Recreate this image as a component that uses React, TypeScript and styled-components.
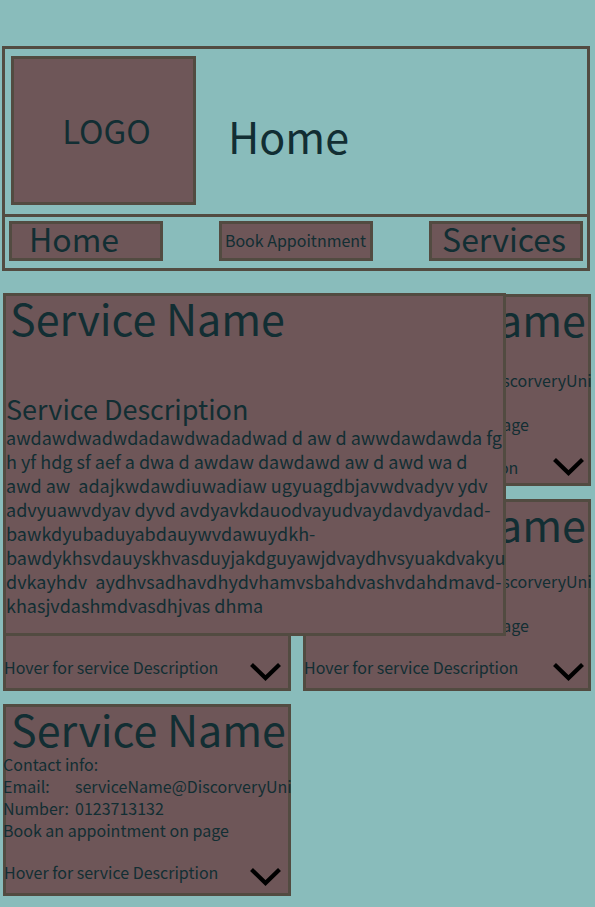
import React from "react";
import styled, { createGlobalStyle } from "styled-components";

const color = {
  page: "#89bcbb",
  panel: "#6e5658",
  line: "#524b41",
  ink: "#122e33",
};

const GlobalStyle = createGlobalStyle`
  *, *::before, *::after { box-sizing: border-box; }
  body {
    margin: 0;
    background: ${color.page};
    color: ${color.ink};
    font-family: "Noto Sans CJK SC", "Noto Sans", sans-serif;
    font-size: 16px;
    line-height: 22px;
  }
  h1, h2, h3, p, dl, dd { margin: 0; font-weight: 400; }
`;

const Page = styled.div`
  padding: 46px 4px 11px 3px;
`;

const Header = styled.header`
  margin: 0 1px 23px -1px;
  border: 3px solid ${color.line};
`;

const Banner = styled.div`
  display: flex;
  align-items: center;
  gap: 32px;
  padding: 7px 6px 9px;
  border-bottom: 3px solid ${color.line};
`;

const Logo = styled.div`
  display: flex;
  align-items: center;
  justify-content: center;
  width: 185px;
  height: 149px;
  padding: 0 0 2px 6px;
  background: ${color.panel};
  border: 3px solid ${color.line};
  font-size: 33px;
  line-height: 40px;
`;

const PageTitle = styled.h1`
  padding-top: 8px;
  font-size: 43px;
  line-height: 56px;
`;

const Nav = styled.nav`
  display: flex;
  justify-content: space-between;
  padding: 4px 4px 7px;
`;

const NavLink = styled.a<{ $large?: boolean; $start?: boolean }>`
  display: flex;
  align-items: center;
  justify-content: ${(p) => (p.$start ? "flex-start" : "center")};
  width: 154px;
  height: 40px;
  padding: ${(p) => (p.$large ? "0 4px 6px 0" : "0 1px 2px 0")};
  padding-left: ${(p) => (p.$start ? "17px" : "0")};
  background: ${color.panel};
  border: 3px solid ${color.line};
  color: inherit;
  font-size: ${(p) => (p.$large ? "32px" : "16px")};
  line-height: 28px;
  text-decoration: none;
  white-space: nowrap;
`;

const Services = styled.main`
  display: grid;
  grid-template-columns: 1fr 1fr;
  gap: 13px 12px;
  position: relative;
`;

const HoverButton = styled.button`
  display: flex;
  align-items: flex-end;
  justify-content: space-between;
  margin-top: auto;
  padding: 0 10px 8px 1px;
  background: none;
  border: 0;
  color: inherit;
  font: inherit;
  text-align: left;
`;

const Card = styled.article`
  display: flex;
  flex-direction: column;
  min-width: 0;
  height: 192px;
  background: ${color.panel};
  box-shadow: inset 0 0 0 3px ${color.line};
  white-space: nowrap;

  &:nth-child(even) ${HoverButton} {
    padding-right: 7px;
  }
`;

const ServiceName = styled.h2`
  padding: 0 8px;
  font-size: 43px;
  line-height: 48px;
`;

const Contact = styled.div<{ $lowered?: boolean }>`
  padding-top: ${(p) => (p.$lowered ? "5px" : "1px")};
`;

const Details = styled.dl`
  display: grid;
  grid-template-columns: 72px 1fr;
`;

const HoverLabel = styled.span<{ $lowered?: boolean }>`
  padding-bottom: ${(p) => (p.$lowered ? "0" : "5px")};
`;

const ChevronIcon = styled.svg`
  display: block;
  margin-bottom: 1px;
`;

const Popover = styled.section`
  position: absolute;
  top: -1px;
  left: 0;
  width: calc(100% - 85px);
  height: 343px;
  background: ${color.panel};
  border: 3px solid ${color.line};
`;

const PopoverName = styled(ServiceName)`
  padding: 0 4px;
  line-height: 43px;
`;

const DescriptionTitle = styled.h3`
  padding-top: 54px;
  font-size: 27px;
  line-height: 32px;
`;

const Description = styled.p`
  font-size: 18px;
  line-height: 24px;
  white-space: pre;
`;

const descriptionLines = [
  "awdawdwadwdadawdwadadwad d aw d awwdawdawda fg",
  "h yf hdg sf aef a dwa d awdaw dawdawd aw d awd wa d",
  "awd aw  adajkwdawdiuwadiaw ugyuagdbjavwdvadyv ydv",
  "advyuawvdyav dyvd avdyavkdauodvayudvaydavdyavdad-",
  "bawkdyubaduyabdauywvdawuydkh-",
  "bawdykhsvdauyskhvasduyjakdguyawjdvaydhvsyuakdvakyu",
  "dvkayhdv  aydhvsadhavdhydvhamvsbahdvashvdahdmavd-",
  "khasjvdashmdvasdhjvas dhma",
];

function Chevron() {
  return (
    <ChevronIcon width="31" height="19" viewBox="0 0 31 19" fill="none" aria-hidden="true">
      <path d="M1.5 1.5 15.5 15 29.5 1.5" stroke="#000" strokeWidth="4.2" />
    </ChevronIcon>
  );
}

function ServiceCard({ lowered }: { lowered?: boolean }) {
  return (
    <Card>
      <ServiceName>Service Name</ServiceName>
      <Contact $lowered={lowered}>
        <p>Contact info:</p>
        <Details>
          <dt>Email:</dt>
          <dd>serviceName@DiscorveryUni</dd>
          <dt>Number:</dt>
          <dd>0123713132</dd>
        </Details>
        <p>Book an appointment on page</p>
      </Contact>
      <HoverButton type="button">
        <HoverLabel $lowered={lowered}>Hover for service Description</HoverLabel>
        <Chevron />
      </HoverButton>
    </Card>
  );
}

function ExpandedCard() {
  return (
    <Card>
      <Popover>
        <PopoverName>Service Name</PopoverName>
        <DescriptionTitle>Service Description</DescriptionTitle>
        <Description>{descriptionLines.join("\n")}</Description>
      </Popover>
    </Card>
  );
}

export default function App() {
  return (
    <>
      <GlobalStyle />
      <Page>
        <Header>
          <Banner>
            <Logo>LOGO</Logo>
            <PageTitle>Home</PageTitle>
          </Banner>
          <Nav>
            <NavLink href="#home" $large $start>Home</NavLink>
            <NavLink href="#book">Book Appoitnment</NavLink>
            <NavLink href="#services" $large>Services</NavLink>
          </Nav>
        </Header>
        <Services>
          <ExpandedCard />
          <ServiceCard lowered />
          <ServiceCard />
          <ServiceCard />
          <ServiceCard />
        </Services>
      </Page>
    </>
  );
}
